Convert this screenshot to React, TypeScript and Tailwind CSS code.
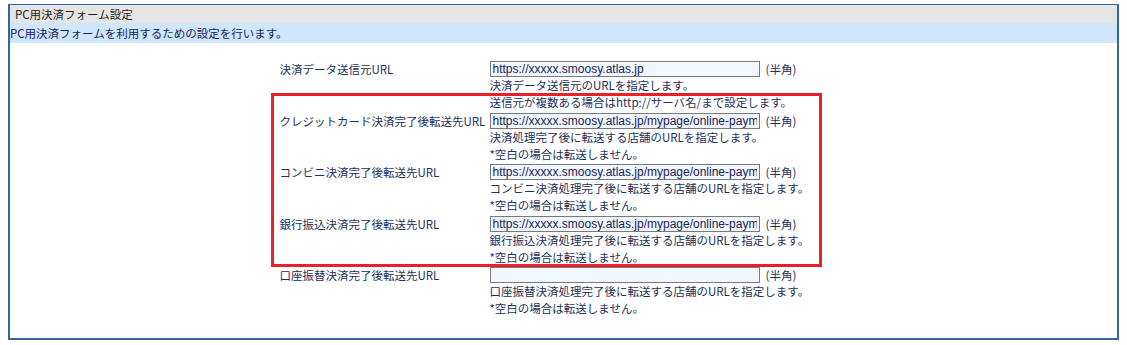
const rows = [
  {
    label: "決済データ送信元URL",
    value: "https://xxxxx.smoosy.atlas.jp",
    notes: ["決済データ送信元のURLを指定します。", "送信元が複数ある場合はhttp://サーバ名/まで設定します。"],
  },
  {
    label: "クレジットカード決済完了後転送先URL",
    value: "https://xxxxx.smoosy.atlas.jp/mypage/online-payment/",
    notes: ["決済処理完了後に転送する店舗のURLを指定します。", "*空白の場合は転送しません。"],
  },
  {
    label: "コンビニ決済完了後転送先URL",
    value: "https://xxxxx.smoosy.atlas.jp/mypage/online-payment/",
    notes: ["コンビニ決済処理完了後に転送する店舗のURLを指定します。", "*空白の場合は転送しません。"],
  },
  {
    label: "銀行振込決済完了後転送先URL",
    value: "https://xxxxx.smoosy.atlas.jp/mypage/online-payment/",
    notes: ["銀行振込決済処理完了後に転送する店舗のURLを指定します。", "*空白の場合は転送しません。"],
  },
  {
    label: "口座振替決済完了後転送先URL",
    value: "",
    notes: ["口座振替決済処理完了後に転送する店舗のURLを指定します。", "*空白の場合は転送しません。"],
  },
];

const jp = "font-['Noto_Sans_CJK_JP','Liberation_Sans',sans-serif]";

export default function App() {
  return (
    <div className={`relative min-h-[345px] bg-white px-[8px] pt-[4px] ${jp} text-[11.5px] text-[#25305a]`}>
      <div className="border-x-2 border-t border-b-2 border-[#33669a] pb-[19px]">
        <div className="h-[18px] bg-[#e5e5e5] pl-[5px] leading-[18px] text-[#222]">PC用決済フォーム設定</div>
        <div className="h-[20px] bg-[#cfe6fc] leading-[20px] text-[#1c2258]">
          PC用決済フォームを利用するための設定を行います。
        </div>

        <div className="mx-auto mt-[18px] w-[568px]">
          {rows.map((r) => (
            <div key={r.label} className="flex pb-[1.6px]">
              <div className="w-[210px] shrink-0 whitespace-nowrap leading-[16px]">{r.label}</div>
              <div className="flex-1">
                <div className="flex h-[16px] items-center gap-[6px]">
                  <input
                    readOnly
                    value={r.value}
                    className="h-[16px] w-[270px] border border-[#7a7a7a] bg-[#f0f7ff] px-[2px] font-['Liberation_Sans',sans-serif] text-[12px] leading-[14px] text-[#1c2258] outline-none"
                  />
                  <span className="leading-[16px]">(半角)</span>
                </div>
                {r.notes.map((n) => (
                  <div key={n} className="h-[17px] whitespace-nowrap leading-[17px]">
                    {n}
                  </div>
                ))}
              </div>
            </div>
          ))}
        </div>
      </div>

      <div className="absolute left-[271px] top-[93px] h-[174px] w-[551px] border-[3px] border-[#e8202a]" />
    </div>
  );
}
